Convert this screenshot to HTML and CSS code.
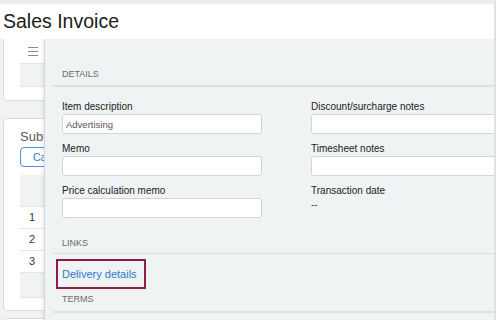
FILE: index.html
```html
<!DOCTYPE html>
<html>
<head>
<meta charset="utf-8">
<link rel="stylesheet" href="styles.css">
</head>
<body>
<div class="frame">
  <header class="title-bar"><h1>Sales Invoice</h1></header>
  <div class="main">
    <aside class="behind">
      <div class="card card-top">
        <svg class="menu-icon" width="10" height="9" viewBox="0 0 10 9"><path d="M0 0.5H10M0 4.5H10M0 8.5H10" stroke="#8a8a8a" stroke-width="1"/></svg>
        <div class="gray-cell"></div>
      </div>
      <div class="card card-sub">
        <div class="sub-title">Subtotals</div>
        <button class="calc-btn">Calculate</button>
        <div class="tbl">
          <div class="th"></div>
          <div class="tr"><span class="num">1</span></div>
          <div class="tr"><span class="num">2</span></div>
          <div class="tr"><span class="num">3</span></div>
          <div class="tf"></div>
        </div>
      </div>
      <div class="card card-next"></div>
    </aside>
    <section class="panel">
      <div class="panel-inner">
        <div class="sec-head details">Details</div>
        <div class="fields">
          <div class="field">
            <label class="lbl">Item description</label>
            <input class="inp" type="text" value="Advertising" readonly>
          </div>
          <div class="field">
            <label class="lbl">Discount/surcharge notes</label>
            <input class="inp" type="text" value="" readonly>
          </div>
          <div class="field">
            <label class="lbl">Memo</label>
            <input class="inp" type="text" value="" readonly>
          </div>
          <div class="field">
            <label class="lbl">Timesheet notes</label>
            <input class="inp" type="text" value="" readonly>
          </div>
          <div class="field">
            <label class="lbl">Price calculation memo</label>
            <input class="inp" type="text" value="" readonly>
          </div>
          <div class="field">
            <label class="lbl">Transaction date</label>
            <div class="val">--</div>
          </div>
        </div>
        <div class="sec-head links">Links</div>
        <a class="link-box" href="#">Delivery details</a>
        <div class="sec-head terms">Terms</div>
      </div>
    </section>
  </div>
</div>
</body>
</html>
```

FILE: styles.css
```css
html, body {
  margin: 0;
  padding: 0;
  background: #ffffff;
  font-family: "Liberation Sans", Arial, sans-serif;
}

.frame {
  width: 494px;
  height: 316px;
  border-top: 4px solid #eeeeee;
  border-right: 2px solid #e1e1e1;
  display: flex;
  flex-direction: column;
  overflow: hidden;
}

.title-bar {
  height: 35px;
  flex: none;
  background: #ffffff;
  padding-left: 3px;
  box-sizing: border-box;
}

.title-bar h1 {
  margin: 0;
  padding-top: 6px;
  font-size: 19.5px;
  line-height: 22px;
  font-weight: normal;
  color: #202020;
}

.main {
  flex: 1;
  display: flex;
  overflow: hidden;
}

/* background page, partly hidden by the side panel */
.behind {
  width: 44px;
  flex: none;
  background: #f0f2f3;
  overflow: hidden;
}

.card {
  width: 140px;
  margin-left: 3px;
  background: #ffffff;
  border: 1px solid #dadcdd;
}

.card-top {
  height: 53px;
  padding-top: 8px;
  border-top: none;
  border-bottom-left-radius: 4px;
}

.menu-icon {
  display: block;
  margin-left: 24px;
}

.gray-cell {
  margin: 7px 0 0 16px;
  height: 22px;
  background: #f0f2f3;
  border-top: 1px solid #e2e4e5;
  border-bottom: 1px solid #e2e4e5;
}

.card-sub {
  margin-top: 17px;
  height: 191px;
  border-radius: 4px 0 0 4px;
}

.sub-title {
  width: 30px;
  overflow: hidden;
  margin-left: 16px;
  padding-top: 10px;
  font-size: 13px;
  line-height: 16px;
  color: #5a5a5a;
  white-space: nowrap;
}

.calc-btn {
  display: block;
  width: 40px;
  overflow: hidden;
  margin: 2px 0 0 16px;
  height: 20px;
  padding: 0 0 0 12px;
  text-align: left;
  border: 1px solid #4a8fd8;
  border-radius: 4px;
  background: #ffffff;
  color: #2d7dd2;
  font-family: inherit;
  font-size: 10.5px;
  line-height: 18px;
  white-space: nowrap;
}

.tbl {
  margin: 8px 0 0 16px;
}

.th {
  height: 31px;
  background: #f0f2f3;
}

.tr {
  height: 21px;
  border-top: 1px solid #e2e4e5;
  background: #ffffff;
}

.num {
  display: inline-block;
  width: 24px;
  text-align: center;
  font-size: 11px;
  line-height: 21px;
  color: #333333;
}

.tf {
  height: 24px;
  background: #f0f2f3;
  border-top: 1px solid #e2e4e5;
  border-bottom: 1px solid #e2e4e5;
}

.card-next {
  margin-top: 7px;
  height: 20px;
  border-radius: 4px 0 0 0;
}

/* side panel */
.panel {
  flex: 1;
  background: #f0f3f4;
  border-left: 1px solid #d2d7da;
  box-shadow: -2px 0 3px rgba(0, 0, 0, 0.06);
  overflow: hidden;
  position: relative;
}

.panel-inner {
  margin-left: 8px;
}

.sec-head {
  font-size: 9px;
  line-height: 11px;
  color: #6a6a6a;
  text-transform: uppercase;
  padding-left: 9px;
}

.sec-head.details {
  margin-top: 30px;
  padding-bottom: 5px;
  border-bottom: 2px solid #dde2e5;
}

.sec-head.links {
  margin-top: 12px;
  padding-bottom: 4px;
  border-bottom: 1px solid #d8dde0;
}

.sec-head.terms {
  margin-top: 5px;
  padding-bottom: 6px;
  border-bottom: 2px solid #dde2e5;
}

.fields {
  margin-top: 13px;
  padding-left: 9px;
  display: grid;
  grid-template-columns: 200px 200px;
  column-gap: 49px;
}

.field {
  display: flex;
  flex-direction: column;
}

.lbl {
  font-size: 10px;
  line-height: 13px;
  margin-bottom: 1px;
  color: #222222;
  white-space: nowrap;
}

.inp {
  display: block;
  width: 200px;
  height: 20px;
  box-sizing: border-box;
  margin: 0 0 8px 0;
  padding: 0 3px;
  border: 1px solid #d0d5d8;
  border-radius: 3px;
  background: #ffffff;
  font-family: inherit;
  font-size: 9.5px;
  color: #555555;
  outline: none;
}

.val {
  font-size: 10px;
  line-height: 14px;
  color: #444444;
}

.link-box {
  display: block;
  width: fit-content;
  margin: 5px 0 0 3px;
  border: 2px solid #8b1d47;
  padding: 7px 7px 6px 4px;
  font-size: 11px;
  line-height: 13px;
  color: #2a7bd0;
  text-decoration: none;
  white-space: nowrap;
}
```
